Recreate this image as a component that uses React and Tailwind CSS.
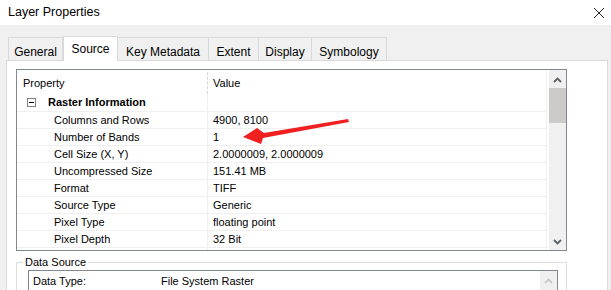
import React from 'react';

const tabs = [
    { label: 'General', w: 'w-[55px]' },
    { label: 'Source', w: 'w-[55px]', active: true },
    { label: 'Key Metadata', w: 'w-[91px]' },
    { label: 'Extent', w: 'w-[50px]' },
    { label: 'Display', w: 'w-[53px]' },
    { label: 'Symbology', w: 'w-[75px]' },
];

const rows = [
    ['Columns and Rows', '4900, 8100'],
    ['Number of Bands', '1'],
    ['Cell Size (X, Y)', '2.0000009, 2.0000009'],
    ['Uncompressed Size', '151.41 MB'],
    ['Format', 'TIFF'],
    ['Source Type', 'Generic'],
    ['Pixel Type', 'floating point'],
    ['Pixel Depth', '32 Bit'],
];

const Chevron = ({ up, color }) => (
    <svg width="9" height="6" viewBox="0 0 9 6">
        <path
            d={up ? 'M1 5 L4.5 1.5 L8 5' : 'M1 1 L4.5 4.5 L8 1'}
            fill="none"
            stroke={color}
            strokeWidth="1.8"
        />
    </svg>
);

const App = () => {
    return (
        <div
            className="relative w-[611px] h-[290px] overflow-hidden bg-[#f0f0f0] flex flex-col text-black"
            style={{ fontFamily: '"Liberation Sans", Arial, sans-serif' }}
        >
            {/* Title bar */}
            <div className="h-[25px] bg-white flex items-center justify-between pl-[8px] pr-[4px] shrink-0">
                <span className="text-[12.5px]">Layer Properties</span>
                <svg width="12" height="12" viewBox="0 0 12 12" className="mr-[2px]">
                    <path d="M1 1 L11 11 M11 1 L1 11" stroke="#222" strokeWidth="1" />
                </svg>
            </div>

            {/* Body */}
            <div className="flex-1 pt-[10px] pl-[6px] flex flex-col">
                {/* Tabs */}
                <div className="flex items-end pl-[2px] h-[25px] relative z-10">
                    {tabs.map((t) =>
                        t.active ? (
                            <div
                                key={t.label}
                                className={`${t.w} h-[25px] -mb-px bg-white border border-b-0 border-[#d9d9d9] flex items-start justify-center pt-[3px] text-[12px]`}
                            >
                                {t.label}
                            </div>
                        ) : (
                            <div
                                key={t.label}
                                className={`${t.w} h-[23px] bg-[#f0f0f0] border border-l-0 first:border-l border-b-0 border-[#d9d9d9] flex items-start justify-center pt-[5px] text-[12px]`}
                            >
                                {t.label}
                            </div>
                        )
                    )}
                </div>

                {/* Panel */}
                <div className="w-[602px] flex-1 bg-white border border-[#d9d9d9] pl-[9px] pt-[8px] text-[11px]">
                    {/* Property grid */}
                    <div className="w-[551px] h-[182px] border border-[#828790] flex overflow-hidden">
                        <div className="w-[530px] border-r border-[#f0f0f0] flex flex-col">
                            <div className="h-[24px] flex items-center pt-[2px] shrink-0">
                                <div className="w-[191px] pl-[6px] border-r border-dashed border-[#d5d5d5] h-full flex items-center">
                                    Property
                                </div>
                                <div className="pl-[5px]">Value</div>
                            </div>
                            <div className="h-[18px] flex border-b border-[#f0f0f0] shrink-0">
                                <div className="w-[191px] border-r border-[#f0f0f0] flex items-center pl-[10px]">
                                    <span className="w-[9px] h-[9px] border border-[#808080] flex items-center justify-center mr-[12px]">
                                        <span className="w-[5px] h-px bg-black" />
                                    </span>
                                    <span className="font-bold">Raster Information</span>
                                </div>
                            </div>
                            {rows.map(([k, v]) => (
                                <div key={k} className="h-[17px] flex border-b border-[#f0f0f0] shrink-0">
                                    <div className="w-[191px] border-r border-[#f0f0f0] flex items-center pl-[37px] pt-px">
                                        {k}
                                    </div>
                                    <div className="flex items-center pl-[5px] pt-px">{v}</div>
                                </div>
                            ))}
                            <div className="flex-1 flex">
                                <div className="w-[191px] border-r border-[#f0f0f0]" />
                            </div>
                        </div>
                        <div className="w-[2px]" />
                        {/* Scrollbar */}
                        <div className="w-[17px] bg-[#f0f0f0] flex flex-col">
                            <div className="h-[18px] flex items-center justify-center pt-[1px]">
                                <Chevron up color="#606060" />
                            </div>
                            <div className="h-[35px] bg-[#cdcaca]" />
                            <div className="flex-1" />
                            <div className="h-[17px] flex items-center justify-center">
                                <Chevron color="#5a5f70" />
                            </div>
                        </div>
                    </div>

                    {/* Data Source group */}
                    <fieldset className="w-[551px] mt-[4px] border border-[#dcdcdc] pl-[6px] pr-[8px] h-[60px]">
                        <legend className="px-[2px] leading-[14px] text-[11px]">Data Source</legend>
                        <div className="mt-[1px] ml-[5px] border border-[#828790] h-[40px] flex">
                            <div className="flex-1 pt-[2px] pl-[4px]">
                                <div className="flex h-[16px] items-center">
                                    <span className="w-[128px]">Data Type:</span>
                                    <span>File System Raster</span>
                                </div>
                            </div>
                            <div className="w-[17px] bg-[#f0f0f0] flex justify-center pt-[7px]">
                                <Chevron up color="#c8c8c8" />
                            </div>
                        </div>
                    </fieldset>
                </div>
            </div>

            {/* Annotation arrow */}
            <svg className="absolute left-0 top-0 pointer-events-none" width="611" height="290">
                <polygon
                    points="348,119 349,122 263,138 261,144 243,137 257,128 264,133"
                    fill="#f02020"
                />
            </svg>
        </div>
    );
};

export default App;
